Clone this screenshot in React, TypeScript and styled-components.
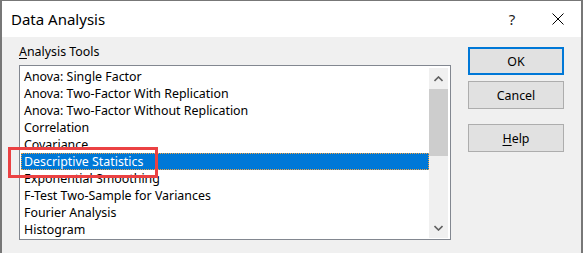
import styled, { createGlobalStyle } from 'styled-components'

const GlobalStyle = createGlobalStyle`
  html, body {
    margin: 0;
    padding: 0;
    background: #ffffff;
  }
  body {
    font-family: "Noto Sans", "Open Sans", sans-serif;
    font-size: 12.4px;
    color: #000000;
  }
`

const Window = styled.div`
  position: relative;
  width: 583px;
  height: 253px;
  box-sizing: border-box;
  border: 1px solid #777777;
  border-left-width: 2px;
  border-right-width: 2px;
  border-bottom: none;
  background: #f0f0f0;
  overflow: hidden;
`

const TitleBar = styled.div`
  display: flex;
  align-items: center;
  height: 36px;
  background: #ffffff;
  padding-left: 9px;
`

const Title = styled.div`
  flex: 1;
  font-size: 15px;
  color: #000000;
`

const TitleButton = styled.div`
  width: 46px;
  height: 36px;
  display: flex;
  align-items: center;
  justify-content: center;
  font-size: 15px;
  color: #222222;
`

const Body = styled.div`
  display: flex;
  padding: 7px 0 0 17px;
`

const LeftColumn = styled.div`
  display: flex;
  flex-direction: column;
  width: 432px;
`

const Label = styled.div`
  height: 21px;
  line-height: 16px;
`

const Accel = styled.span`
  text-decoration: underline;
  text-underline-offset: 2px;
`

const ListBox = styled.div`
  display: flex;
  height: 175px;
  box-sizing: border-box;
  border: 1px solid #828790;
  background: #ffffff;
  padding: 2px 1px 1px 1px;
`

const Items = styled.ul`
  flex: 1;
  list-style: none;
  margin: 0;
  padding: 0;
  overflow: hidden;
`

const Item = styled.li<{ selected?: boolean }>`
  height: 17px;
  line-height: 17px;
  padding-left: 3px;
  box-sizing: border-box;
  white-space: nowrap;
  background: ${p => (p.selected ? '#0078d7' : 'transparent')};
  color: ${p => (p.selected ? '#ffffff' : '#000000')};
  outline: ${p => (p.selected ? '1px dotted #f4a340' : 'none')};
  outline-offset: -1px;
`

const ScrollBar = styled.div`
  width: 19px;
  margin-right: 1px;
  display: flex;
  flex-direction: column;
  background: #f0f0f0;
`

const Arrow = styled.div`
  height: 21px;
  display: flex;
  align-items: center;
  justify-content: center;
`

const Track = styled.div`
  flex: 1;
  display: flex;
  flex-direction: column;
`

const Thumb = styled.div`
  height: 67px;
  background: #cdcdcd;
`

const Buttons = styled.div`
  display: flex;
  flex-direction: column;
  margin-left: 17px;
  padding-top: 3px;
`

const Button = styled.div<{ primary?: boolean; gapTop?: number }>`
  width: 96px;
  height: 28px;
  box-sizing: border-box;
  display: flex;
  align-items: center;
  justify-content: center;
  background: #e1e1e1;
  border: ${p => (p.primary ? '2px solid #0078d7' : '1px solid #adadad')};
  margin-top: ${p => p.gapTop ?? 0}px;
`

const Highlight = styled.div`
  position: absolute;
  left: 6px;
  top: 146px;
  width: 150px;
  height: 31px;
  box-sizing: border-box;
  border: 3px solid #eb4143;
`

const tools = [
  'Anova: Single Factor',
  'Anova: Two-Factor With Replication',
  'Anova: Two-Factor Without Replication',
  'Correlation',
  'Covariance',
  'Descriptive Statistics',
  'Exponential Smoothing',
  'F-Test Two-Sample for Variances',
  'Fourier Analysis',
  'Histogram',
]

const Chevron = ({ up }: { up?: boolean }) => (
  <svg width="9" height="6" viewBox="0 0 9 6">
    <path
      d={up ? 'M0.5 5 L4.5 1 L8.5 5' : 'M0.5 1 L4.5 5 L8.5 1'}
      fill="none"
      stroke="#606060"
      strokeWidth="1.6"
    />
  </svg>
)

export default function App() {
  return (
    <>
      <GlobalStyle />
      <Window>
        <TitleBar>
          <Title>Data Analysis</Title>
          <TitleButton>?</TitleButton>
          <TitleButton>
            <svg width="12" height="12" viewBox="0 0 12 12">
              <path d="M0.5 0.5 L11.5 11.5 M11.5 0.5 L0.5 11.5" stroke="#000" strokeWidth="1" />
            </svg>
          </TitleButton>
        </TitleBar>
        <Body>
          <LeftColumn>
            <Label><Accel>A</Accel>nalysis Tools</Label>
            <ListBox>
              <Items>
                {tools.map((t, i) => (
                  <Item key={t} selected={i === 5}>{t}</Item>
                ))}
              </Items>
              <ScrollBar>
                <Arrow><Chevron up /></Arrow>
                <Track>
                  <Thumb />
                </Track>
                <Arrow><Chevron /></Arrow>
              </ScrollBar>
            </ListBox>
          </LeftColumn>
          <Buttons>
            <Button primary>OK</Button>
            <Button gapTop={6}>Cancel</Button>
            <Button gapTop={15}><Accel>H</Accel>elp</Button>
          </Buttons>
        </Body>
        <Highlight />
      </Window>
    </>
  )
}
